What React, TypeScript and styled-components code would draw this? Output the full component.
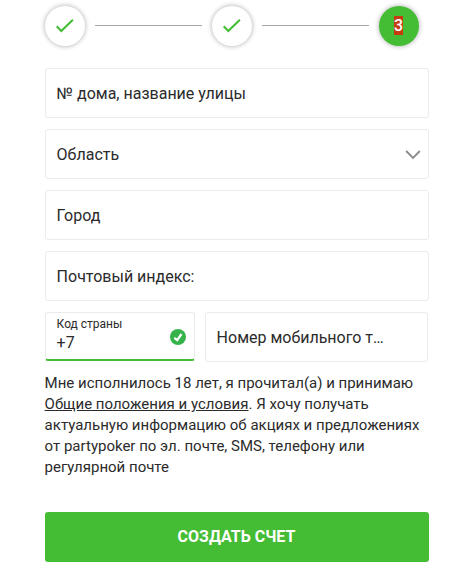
import React from 'react';
import styled, { createGlobalStyle, css } from 'styled-components';

const Global = createGlobalStyle`
  *, *::before, *::after { box-sizing: border-box; }
  body { margin: 0; background: #fff; font-family: Roboto, "Liberation Sans", sans-serif; color: #2b2b2b; }
`;

const Page = styled.main`
  width: 464px;
  height: 576px;
  overflow: hidden;
  padding: 6px 35px 0 45px;
`;

const Stepper = styled.div`
  display: flex;
  align-items: center;
  justify-content: space-between;
  height: 40px;
  width: 374px;
`;

const Step = styled.div<{ $active?: boolean }>`
  display: flex;
  align-items: center;
  justify-content: center;
  flex: none;
  width: 40px;
  height: 40px;
  border-radius: 50%;
  font-size: 16px;
  background: ${(p) => (p.$active ? '#44bd35' : '#fff')};
  box-shadow: 0 0 4px 1px rgba(0, 0, 0, 0.24);
`;

const Selected = styled.span`
  margin: 0 1px 1px 0;
  color: #fff;
  background: #c43c10;
  font-weight: 500;
  line-height: 19px;
`;

const Connector = styled.span`
  width: 107px;
  height: 1px;
  margin-bottom: 1px;
  background: #a6a6a6;
`;

const Fields = styled.form`
  display: flex;
  flex-direction: column;
  gap: 11px;
  margin-top: 22px;
`;

const Row = styled.div`
  display: flex;
  gap: 10px;
  height: 50px;
`;

const Field = styled.div<{ $width?: number; $focused?: boolean }>`
  display: flex;
  align-items: center;
  justify-content: space-between;
  width: ${(p) => p.$width ?? 384}px;
  height: 50px;
  padding: 2px 7px 0 10.6px;
  border: 1px solid #ebebeb;
  border-radius: 3px;
  font-size: 16px;
  line-height: 20px;
  ${(p) => p.$focused && css`
    height: 49px;
    padding: 2px 8px 0 10.6px;
    border-bottom: 2px solid #44bd35;
  `}
`;

const Code = styled.div`
  display: flex;
  flex-direction: column;
  margin-bottom: 4px;
`;

const Label = styled.span`
  margin-bottom: 2px;
  font-size: 12px;
  line-height: 14px;
`;

const Terms = styled.p`
  margin: 11px 0 0 -0.4px;
  width: 390px;
  font-size: 15px;
  line-height: 21px;
  white-space: nowrap;
`;

const Link = styled.span`
  text-decoration: underline;
`;

const Submit = styled.button`
  display: block;
  width: 384px;
  height: 50px;
  margin-top: 34px;
  padding: 0 1px 2px 0;
  border: 0;
  border-radius: 3px;
  background: #44bd35;
  color: #fff;
  font: 700 16px Roboto, sans-serif;
`;

const Check = () => (
  <svg width="20" height="16" viewBox="0 0 20 16" fill="none">
    <path d="M1.7 8.3 6.3 13 17.9 1.8" stroke="#44bd35" strokeWidth="2.1" />
  </svg>
);

export default function App() {
  return (
    <Page>
      <Global />
      <Stepper>
        <Step><Check /></Step>
        <Connector />
        <Step><Check /></Step>
        <Connector />
        <Step $active><Selected>3</Selected></Step>
      </Stepper>
      <Fields>
        <Field>№ дома, название улицы</Field>
        <Field>
          Область
          <svg width="16" height="10" viewBox="0 0 16 10" fill="none">
            <path d="M1.2 1 8 7.8 14.8 1" stroke="#8c8c8c" strokeWidth="1.9" />
          </svg>
        </Field>
        <Field>Город</Field>
        <Field>Почтовый индекс:</Field>
        <Row>
          <Field $width={150} $focused>
            <Code>
              <Label>Код страны</Label>
              <span>+7</span>
            </Code>
            <svg width="16" height="16" viewBox="0 0 16 16" fill="none">
              <circle cx="8" cy="8" r="8" fill="#35b24a" />
              <path d="M4.3 8.8 7.2 11.1 11.5 5" stroke="#fff" strokeWidth="2.2" />
            </svg>
          </Field>
          <Field $width={223}>Номер мобильного т…</Field>
        </Row>
      </Fields>
      <Terms>
        Мне исполнилось 18 лет, я прочитал(а) и принимаю<br />
        <Link>Общие положения и условия</Link>. Я хочу получать<br />
        актуальную информацию об акциях и предложениях<br />
        от partypoker по эл. почте, SMS, телефону или<br />
        регулярной почте
      </Terms>
      <Submit>СОЗДАТЬ СЧЕТ</Submit>
    </Page>
  );
}
